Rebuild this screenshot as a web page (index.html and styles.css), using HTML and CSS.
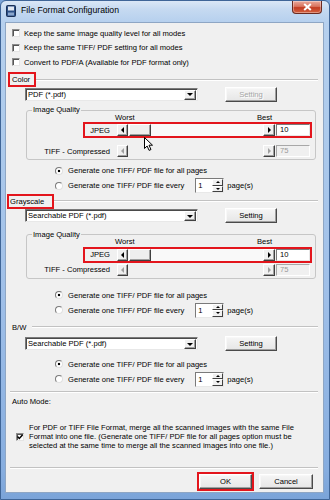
FILE: index.html
```html
<!DOCTYPE html>
<html lang="en">
<head>
<meta charset="utf-8">
<title>File Format Configuration</title>
<link rel="stylesheet" href="styles.css">
</head>
<body>
<div class="window">
  <div class="titlebar">
    <svg class="app-icon" width="10" height="12" viewBox="0 0 10 12">
      <rect x="0.5" y="0.5" width="9" height="11" rx="1" fill="#2b4f86" stroke="#1a2f55"/>
      <rect x="2" y="1.5" width="6" height="4" fill="#e2e8f1"/>
      <rect x="2" y="7.5" width="6" height="3" fill="#8aa6cc"/>
    </svg>
    <span class="title">File Format Configuration</span>
    <div class="close-btn">
      <svg width="9" height="8" viewBox="0 0 9 8"><path d="M1.2 1 L7.8 7 M7.8 1 L1.2 7" stroke="#fff" stroke-width="2"/></svg>
    </div>
  </div>
  <div class="client">
    <div class="check-row first"><span class="checkbox"></span><span>Keep the same image quality level for all modes</span></div>
    <div class="check-row"><span class="checkbox"></span><span>Keep the same TIFF/ PDF setting for all modes</span></div>
    <div class="check-row"><span class="checkbox"></span><span>Convert to PDF/A (Available for PDF format only)</span></div>

    <div class="section-head sec-color">
      <span class="sec-label hl lbl-color">Color</span><span class="etched"></span>
    </div>
    <div class="format-row">
      <div class="combo"><span class="combo-text">PDF (*.pdf)</span><span class="combo-btn"></span></div>
      <div class="btn setting disabled">Setting</div>
    </div>
    <fieldset class="group group-color">
      <legend>Image Quality</legend>
      <div class="scale-row"><span class="worst">Worst</span><span>Best</span></div>
      <div class="q-row hl">
        <span class="q-label"><span>JPEG</span></span>
        <div class="hscroll">
          <span class="sbtn left"></span>
          <span class="track"><span class="thumb"></span></span>
          <span class="sbtn right"></span>
          <svg class="cursor" width="10" height="15" viewBox="0 0 10 15"><path d="M0.5 0.5 L0.5 11.5 L3.1 9 L5.1 13.4 L7 12.5 L5 8.2 L8.5 8.2 Z" fill="#fff" stroke="#000" stroke-width="1" stroke-linejoin="round"/></svg>
        </div>
        <span class="textbox">10</span>
      </div>
      <div class="q-row tiff-row">
        <span class="q-label"><span>TIFF - Compressed</span></span>
        <div class="hscroll disabled">
          <span class="sbtn left"></span>
          <span class="track"></span>
          <span class="sbtn right"></span>
        </div>
        <span class="textbox disabled">75</span>
      </div>
    </fieldset>
    <div class="radio-row first"><span class="radio on"></span><span>Generate one TIFF/ PDF file for all pages</span></div>
    <div class="radio-row"><span class="radio"></span><span>Generate one TIFF/ PDF file every</span><span class="spin"><span class="spin-text">1</span><span class="spin-btns"><span class="spin-up"></span><span class="spin-down"></span></span></span><span class="pages">page(s)</span></div>

    <div class="section-head sec-gray">
      <span class="sec-label hl lbl-gray">Grayscale</span><span class="etched"></span>
    </div>
    <div class="format-row">
      <div class="combo"><span class="combo-text">Searchable PDF (*.pdf)</span><span class="combo-btn"></span></div>
      <div class="btn setting">Setting</div>
    </div>
    <fieldset class="group group-gray">
      <legend>Image Quality</legend>
      <div class="scale-row"><span class="worst">Worst</span><span>Best</span></div>
      <div class="q-row hl">
        <span class="q-label"><span>JPEG</span></span>
        <div class="hscroll">
          <span class="sbtn left"></span>
          <span class="track"><span class="thumb"></span></span>
          <span class="sbtn right"></span>
        </div>
        <span class="textbox">10</span>
      </div>
      <div class="q-row tiff-row tiff-tight">
        <span class="q-label"><span>TIFF - Compressed</span></span>
        <div class="hscroll disabled">
          <span class="sbtn left"></span>
          <span class="track"></span>
          <span class="sbtn right"></span>
        </div>
        <span class="textbox disabled">75</span>
      </div>
    </fieldset>
    <div class="radio-row first-gray"><span class="radio on"></span><span>Generate one TIFF/ PDF file for all pages</span></div>
    <div class="radio-row"><span class="radio"></span><span>Generate one TIFF/ PDF file every</span><span class="spin"><span class="spin-text">1</span><span class="spin-btns"><span class="spin-up"></span><span class="spin-down"></span></span></span><span class="pages">page(s)</span></div>

    <div class="section-head sec-bw">
      <span class="sec-label lbl-bw">B/W</span><span class="etched"></span>
    </div>
    <div class="format-row bw-format">
      <div class="combo"><span class="combo-text">Searchable PDF (*.pdf)</span><span class="combo-btn"></span></div>
      <div class="btn setting">Setting</div>
    </div>
    <div class="radio-row first-bw"><span class="radio on"></span><span>Generate one TIFF/ PDF file for all pages</span></div>
    <div class="radio-row"><span class="radio"></span><span>Generate one TIFF/ PDF file every</span><span class="spin"><span class="spin-text">1</span><span class="spin-btns"><span class="spin-up"></span><span class="spin-down"></span></span></span><span class="pages">page(s)</span></div>

    <div class="separator sep-auto"></div>
    <div class="auto-label">Auto Mode:</div>
    <div class="auto-row">
      <span class="checkbox checked"><svg width="6" height="6" viewBox="0 0 6 6"><path d="M0.5 2.5 L2.3 4.4 L5.6 0.8" fill="none" stroke="#000" stroke-width="1.4"/></svg></span>
      <p class="auto-text">For PDF or TIFF File Format, merge all the scanned images with the same File<br>Format into one file. (Generate one TIFF/ PDF file for all pages option must be<br>selected at the same time to merge all the scanned images into one file.)</p>
    </div>
    <div class="separator sep-bottom"></div>
    <div class="button-row">
      <div class="btn dlg-btn ok">OK</div>
      <div class="btn dlg-btn">Cancel</div>
    </div>
  </div>
</div>
</body>
</html>
```

FILE: styles.css
```css
* { box-sizing: border-box; }
html, body { margin: 0; padding: 0; }
body {
  width: 330px; height: 500px; overflow: hidden;
  background: #7ba4d8;
  font-family: "Liberation Sans", Arial, sans-serif;
  font-size: 7.6px; line-height: 9px; color: #000;
}
.window {
  width: 330px; height: 500px;
  display: flex; flex-direction: column;
  border: 1px solid #3f6597;
  border-radius: 6px 6px 0 0;
  background: linear-gradient(180deg, #dae7f6 0px, #c6daf1 8px, #b6d0ee 21px, #aecbec 120px, #9fbfe8 300px, #86addf 470px, #7aa3d8 500px);
}
.titlebar { height: 21px; flex: none; display: flex; align-items: flex-start; padding-left: 5px; }
.app-icon { margin-top: 4px; flex: none; }
.title { margin-left: 5px; margin-top: 3px; font-size: 8.7px; line-height: 12px; white-space: nowrap; }
.close-btn {
  margin-left: auto; margin-right: 7px;
  width: 30px; height: 13px;
  display: flex; align-items: center; justify-content: center;
  border: 1px solid #6b2a20; border-top: none;
  border-radius: 0 0 4px 4px;
  background: linear-gradient(180deg, #eaa99c 0, #d9745f 45%, #c33c23 55%, #d3613f 100%);
  box-shadow: inset 0 0 0 1px rgba(255,255,255,.35);
}
.client {
  margin: 0 5px 6px 4px; flex: 1;
  background: #f0f0f0;
  border: 1px solid #8ea6c4;
  display: flex; flex-direction: column;
  padding-top: 3px;
}

/* checkboxes */
.check-row { height: 14.5px; flex: none; display: flex; align-items: center; padding-left: 6px; white-space: nowrap; }
.checkbox {
  width: 8px; height: 8px; flex: none; margin-right: 4px;
  background: #fff;
  border: 1px solid; border-color: #8c8c8c #e4e4e4 #e4e4e4 #8c8c8c;
  box-shadow: inset 1px 1px 0 #555;
  display: flex; align-items: center; justify-content: center;
}

/* section headers */
.section-head { height: 15px; flex: none; display: flex; align-items: center; padding-left: 2px; padding-right: 5px; }
.sec-label { height: 15px; display: flex; align-items: center; border: 2px solid transparent; padding-left: 2px; white-space: nowrap; flex: none; }
.hl { border-color: #e3151c; }
.lbl-color { width: 28px; }
.lbl-gray { width: 47px; margin-left: -1px; padding-left: 1px; }
.lbl-bw { padding-right: 4px; }
.etched { flex: 1; height: 2px; border-top: 1px solid #c2c2c2; border-bottom: 1px solid #fff; }
.sec-color { margin-top: 2.5px; }
.sec-gray { margin-top: 0.5px; }
.sec-bw { margin-top: 2px; }

/* format row */
.format-row { height: 14px; flex: none; display: flex; align-items: center; padding-left: 19px; }
.bw-format { margin-top: 2px; }
.combo {
  width: 173px; height: 13px; display: flex;
  background: #fff;
  border: 1px solid; border-color: #7a7a7a #e8e8e8 #e8e8e8 #7a7a7a;
  box-shadow: inset 1px 1px 0 #4a4a4a;
}
.combo-text { flex: 1; padding-left: 2px; padding-top: 1px; line-height: 10px; white-space: nowrap; }
.combo-btn {
  width: 12px; flex: none; margin: 1px 1px 0 0;
  background: #f0f0f0;
  border: 1px solid; border-color: #fff #404040 #404040 #fff;
  box-shadow: inset -1px -1px 0 #a0a0a0;
  display: flex; align-items: center; justify-content: center;
}
.combo-btn::before { content: ""; border-style: solid; border-width: 3px 3px 0 3px; border-color: #000 transparent transparent transparent; }

.btn {
  height: 15px; display: flex; align-items: center; justify-content: center; flex: none;
  background: linear-gradient(180deg, #f5f5f5, #e6e6e6);
  border: 1px solid; border-color: #fff #4a4a4a #4a4a4a #fff;
  box-shadow: inset -1px -1px 0 #a0a0a0, inset 1px 1px 0 #f8f8f8;
  white-space: nowrap;
}
.btn.disabled { color: #a6a6a6; text-shadow: 1px 1px 0 #fff; }
.setting { width: 52px; margin-left: 27px; }

/* group boxes */
.group {
  margin: 4px 0 0 20px; width: 290px; min-width: 0;
  padding: 0;
  border: 1px solid #c6c6c6; border-radius: 3px;
  flex: none;
}
.group-gray { margin-top: 7px; padding-bottom: 2px; }
.group legend { margin-left: 5px; padding: 0 1px; line-height: 10px; }
.scale-row { margin-top: -2px; height: 8px; display: flex; align-items: center; padding-left: 88px; white-space: nowrap; }
.worst { width: 142px; flex: none; }

.q-row {
  margin-left: 56px; width: 229px; height: 16px; margin-top: 1px;
  display: flex; align-items: center;
  border: 2px solid transparent;
}
.q-row.hl { border-color: #e3151c; }
.tiff-row { margin-top: 5px; }
.tiff-row.tiff-tight { margin-top: 1px; height: 12px; border-width: 0 2px; }
.q-label { width: 32px; flex: none; display: flex; justify-content: flex-end; padding-right: 7px; white-space: nowrap; }
.q-label span { flex: none; }
.hscroll { width: 158px; height: 12px; flex: none; display: flex; position: relative; }
.sbtn {
  width: 11px; flex: none;
  background: #f0f0f0;
  border: 1px solid; border-color: #fff #404040 #404040 #fff;
  box-shadow: inset -1px -1px 0 #a0a0a0;
  display: flex; align-items: center; justify-content: center;
}
.sbtn.right { width: 12px; }
.sbtn.left::before { content: ""; border-style: solid; border-width: 3px 3px 3px 0; border-color: transparent #000 transparent transparent; }
.sbtn.right::before { content: ""; border-style: solid; border-width: 3px 0 3px 3px; border-color: transparent transparent transparent #000; }
.track { flex: 1; background: #f9f9f9; display: flex; }
.thumb {
  width: 22px; margin-left: 1px;
  background: #eeeeee;
  border: 1px solid; border-color: #fff #404040 #404040 #fff;
  box-shadow: inset -1px -1px 0 #a0a0a0;
}
.hscroll.disabled .track { background: transparent; }
.hscroll.disabled .sbtn.left::before { border-right-color: #a0a0a0; }
.hscroll.disabled .sbtn.right::before { border-left-color: #a0a0a0; }
.cursor { position: absolute; left: 27px; top: 13px; }
.textbox {
  width: 34px; height: 12px; margin-left: 1px; flex: none;
  background: #fff;
  border: 1px solid; border-color: #7a7a7a #e8e8e8 #e8e8e8 #7a7a7a;
  padding-left: 3px; line-height: 10px;
}
.textbox.disabled { background: #f0f0f0; color: #9a9a9a; border-color: #a8a8a8 #fff #fff #a8a8a8; }

/* radios */
.radio-row { height: 15px; flex: none; display: flex; align-items: center; padding-left: 49px; white-space: nowrap; }
.radio-row.first { margin-top: 3px; }
.radio-row.first-gray { margin-top: 9px; }
.radio-row.first-bw { margin-top: 6px; }
.radio {
  width: 8px; height: 8px; flex: none; margin-right: 5px;
  border-radius: 50%;
  background: #fff;
  border: 1px solid; border-color: #7a7a7a #e0e0e0 #e0e0e0 #7a7a7a;
}
.radio.on { background: radial-gradient(circle, #000 0 1.3px, #fff 1.6px); }
.spin {
  width: 29px; height: 15px; margin-left: 11px; flex: none;
  display: flex; background: #fff;
  border: 1px solid; border-color: #7a7a7a #e8e8e8 #e8e8e8 #7a7a7a;
}
.spin-text { flex: 1; padding-left: 2px; padding-top: 2px; }
.spin-btns { width: 11px; flex: none; display: flex; flex-direction: column; }
.spin-up, .spin-down {
  flex: 1;
  background: #f0f0f0;
  border: 1px solid; border-color: #fff #404040 #404040 #fff;
  display: flex; align-items: center; justify-content: center;
}
.spin-up::before { content: ""; border-style: solid; border-width: 0 2px 2px 2px; border-color: transparent transparent #000 transparent; }
.spin-down::before { content: ""; border-style: solid; border-width: 2px 2px 0 2px; border-color: #000 transparent transparent transparent; }
.pages { margin-left: 3px; }

/* bottom */
.separator { height: 2px; flex: none; margin: 0 5px 0 4px; border-top: 1px solid #c2c2c2; border-bottom: 1px solid #fff; }
.sep-auto { margin-top: 4px; }
.auto-label { margin-top: 4px; height: 10px; line-height: 10px; padding-left: 6px; flex: none; }
.auto-row { margin-top: 16.5px; display: flex; align-items: center; padding-left: 10px; flex: none; }
.auto-row .checkbox { margin-right: 5px; }
.auto-text { margin: 0; line-height: 9px; white-space: nowrap; }
.sep-bottom { margin-top: 17px; }
.button-row { margin-top: 5px; display: flex; justify-content: flex-end; gap: 7px; padding-right: 10px; flex: none; }
.dlg-btn { width: 54px; }
.ok { width: 53px; outline: 2px solid #e3151c; }
```
